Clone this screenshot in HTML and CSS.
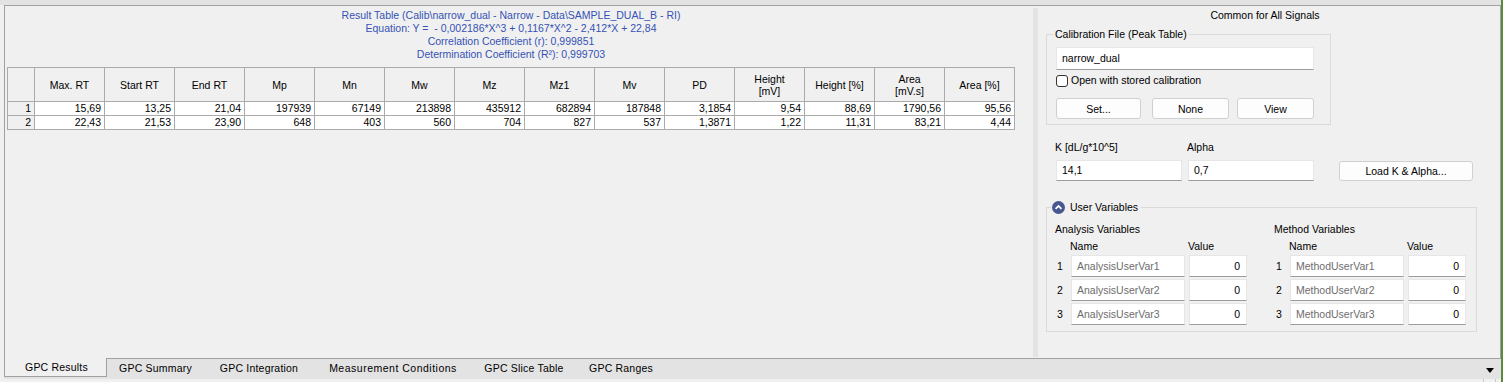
FILE: index.html
```html
<!DOCTYPE html>
<html lang="en">
<head>
    <meta charset="UTF-8">
    <meta name="viewport" content="width=device-width, initial-scale=1.0">
    <title>GPC Results</title>
    <link rel="stylesheet" href="styles.css">
</head>
<body>

    <div class="window">
        <div class="topstrip"></div>

        <div class="workspace">
            <!-- result table -->
            <div class="results">
                <div class="results-inner">
                    <div class="table-title">
                        <div>Result Table (Calib\narrow_dual - Narrow - Data\SAMPLE_DUAL_B - RI)</div>
                        <div>Equation: Y = &nbsp;- 0,002186*X^3 + 0,1167*X^2 - 2,412*X + 22,84</div>
                        <div>Correlation Coefficient (r): 0,999851</div>
                        <div>Determination Coefficient (R²): 0,999703</div>
                    </div>
                    <table class="grid">
                        <colgroup>
                            <col class="c-row">
                            <col><col><col><col><col><col><col><col><col><col><col><col><col><col>
                        </colgroup>
                        <tr class="head">
                            <th></th>
                            <th>Max. RT</th>
                            <th>Start RT</th>
                            <th>End RT</th>
                            <th>Mp</th>
                            <th>Mn</th>
                            <th>Mw</th>
                            <th>Mz</th>
                            <th>Mz1</th>
                            <th>Mv</th>
                            <th>PD</th>
                            <th>Height<br>[mV]</th>
                            <th>Height [%]</th>
                            <th>Area<br>[mV.s]</th>
                            <th>Area [%]</th>
                        </tr>
                        <tr>
                            <th class="rownum">1</th>
                            <td>15,69</td><td>13,25</td><td>21,04</td><td>197939</td><td>67149</td><td>213898</td><td>435912</td>
                            <td>682894</td><td>187848</td><td>3,1854</td><td>9,54</td><td>88,69</td><td>1790,56</td><td>95,56</td>
                        </tr>
                        <tr>
                            <th class="rownum">2</th>
                            <td>22,43</td><td>21,53</td><td>23,90</td><td>648</td><td>403</td><td>560</td><td>704</td>
                            <td>827</td><td>537</td><td>1,3871</td><td>1,22</td><td>11,31</td><td>83,21</td><td>4,44</td>
                        </tr>
                    </table>
                </div>
            </div>

            <div class="splitter"></div>

            <!-- settings common for all signals -->
            <div class="side">
                <div class="side-title">Common for All Signals</div>

                <fieldset class="group calib">
                    <legend>Calibration File (Peak Table)</legend>
                    <div class="field calib-file">narrow_dual</div>
                    <label class="check"><span class="box"></span>Open with stored calibration</label>
                    <div class="btn-row">
                        <button class="btn btn-set">Set...</button>
                        <button class="btn btn-none">None</button>
                        <button class="btn btn-view">View</button>
                    </div>
                </fieldset>

                <div class="kalpha">
                    <div class="lbl">K [dL/g*10^5]</div>
                    <div class="lbl">Alpha</div>
                    <div></div>
                    <div class="field">14,1</div>
                    <div class="field">0,7</div>
                    <button class="btn btn-load">Load K &amp; Alpha...</button>
                </div>

                <fieldset class="group uservars">
                    <legend>
                        <svg class="collapse" width="13" height="13" viewBox="0 0 13 13">
                            <circle cx="6.5" cy="6.5" r="6.5" fill="#47578f"/>
                            <path d="M3.6 7.8 L6.5 4.9 L9.4 7.8" fill="none" stroke="#fff" stroke-width="1.8"/>
                        </svg>
                        User Variables
                    </legend>
                    <div class="var-cols">
                        <div class="varblock">
                            <div class="vb-title">Analysis Variables</div>
                            <div class="vb-grid">
                                <div></div><div class="vb-head">Name</div><div class="vb-head">Value</div>
                                <div class="num">1</div><div class="field name">AnalysisUserVar1</div><div class="field val">0</div>
                                <div class="num">2</div><div class="field name">AnalysisUserVar2</div><div class="field val">0</div>
                                <div class="num">3</div><div class="field name">AnalysisUserVar3</div><div class="field val">0</div>
                            </div>
                        </div>
                        <div class="varblock method">
                            <div class="vb-title">Method Variables</div>
                            <div class="vb-grid">
                                <div></div><div class="vb-head">Name</div><div class="vb-head">Value</div>
                                <div class="num">1</div><div class="field name">MethodUserVar1</div><div class="field val">0</div>
                                <div class="num">2</div><div class="field name">MethodUserVar2</div><div class="field val">0</div>
                                <div class="num">3</div><div class="field name">MethodUserVar3</div><div class="field val">0</div>
                            </div>
                        </div>
                    </div>
                </fieldset>
            </div>
        </div>

        <div class="tabbar">
            <div class="tab active">GPC Results</div>
            <div class="tab t-summary">GPC Summary</div>
            <div class="tab t-integration">GPC Integration</div>
            <div class="tab t-conditions">Measurement Conditions</div>
            <div class="tab t-slice">GPC Slice Table</div>
            <div class="tab t-ranges">GPC Ranges</div>
            <div class="tab-menu"></div>
        </div>
        <div class="tabfoot"><span></span></div>
    </div>

</body>
</html>
```

FILE: styles.css
```css
body {
    margin: 0;
    padding: 0;
    font-family: "Liberation Sans", Arial, sans-serif;
    font-size: 10.5px;
    color: #000;
    background-color: #f0f0f0;
    overflow: hidden;
}
.window {
    width: 1501px;
    height: 382px;
    border-right: 2px solid #5a8b3c;
    background-color: #f0f0f0;
}
.topstrip {
    height: 5px;
    background-color: #e3e3e3;
}
.workspace {
    margin-left: 4px;
    height: 352px;
    border: 1px solid #a0a0a0;
    display: flex;
}

/* left: result table */
.results {
    width: 1028px;
    padding: 3px 0 0 2px;
    box-sizing: border-box;
}
.results-inner {
    width: 1008px;
}
.table-title {
    text-align: center;
    color: #3552b4;
    line-height: 13px;
    margin-bottom: 6px;
}
.grid {
    border-collapse: collapse;
    table-layout: fixed;
    width: 1008px;
    background-color: #fff;
}
.grid col {
    width: 70px;
}
.grid col.c-row {
    width: 27px;
}
.grid th,
.grid td {
    border: 1px solid #ababab;
    padding: 0 3px 0 0;
    line-height: 13px;
    height: 13px;
    white-space: nowrap;
}
.grid th {
    background-color: #f0f0f0;
    font-weight: normal;
}
.grid td,
.grid th.rownum {
    text-align: right;
}
.grid tr.head th {
    height: 33px;
    text-align: center;
    line-height: 12px;
    padding: 0;
}

.splitter {
    width: 5px;
    margin: 2px 0 1px;
    background-color: #e3e3e3;
}

/* right: common settings */
.side {
    width: 460px;
    padding: 3px 0 0 8px;
    box-sizing: border-box;
}
.side-title {
    line-height: 13px;
    text-align: center;
    padding-right: 14px;
}
.group {
    margin: 0;
    border: 1px solid #dadada;
    min-width: 0;
}
.group legend {
    padding: 0 2px;
    margin-left: -3px;
    line-height: 13px;
}
.calib {
    margin-top: 6px;
    width: 285px;
    box-sizing: border-box;
    padding: 0 16px 5px 9px;
}
.field {
    background-color: #fff;
    border: 1px solid #e6e6e6;
    border-bottom-color: #9c9c9c;
    box-sizing: border-box;
    white-space: nowrap;
    overflow: hidden;
}
.calib-file {
    margin-top: 6px;
    height: 23px;
    line-height: 21px;
    padding-left: 5px;
}
.check {
    margin-top: 4px;
    height: 13px;
    line-height: 13px;
    display: flex;
    align-items: center;
}
.check .box {
    width: 12px;
    height: 12px;
    box-sizing: border-box;
    border: 1px solid #333;
    border-radius: 3px;
    background-color: #fff;
    margin-right: 3px;
}
.btn-row {
    margin-top: 11px;
    display: flex;
}
.btn {
    font-family: inherit;
    font-size: 10.5px;
    color: #000;
    height: 21px;
    padding: 0;
    background-color: #fdfdfd;
    border: 1px solid #d0d0d0;
    border-radius: 3px;
}
.btn-set {
    width: 85px;
}
.btn-none {
    width: 77px;
    margin-left: 11px;
}
.btn-view {
    width: 77px;
    margin-left: 8px;
}

.kalpha {
    margin: 16px 0 0 10px;
    display: grid;
    grid-template-columns: 126px 126px 153px;
    column-gap: 6px;
    row-gap: 6px;
}
.kalpha .lbl {
    line-height: 13px;
    margin-left: -1px;
}
.kalpha .field {
    height: 21px;
    line-height: 19px;
    padding-left: 5px;
}
.btn-load {
    width: 134px;
    margin-left: 19px;
    height: 20px;
    align-self: center;
}

.uservars {
    margin-top: 20px;
    width: 431px;
    box-sizing: border-box;
    padding: 0 8px 6px 8px;
}
.uservars legend {
    display: flex;
    align-items: center;
    margin-left: -4px;
    padding: 0 3px 0 1px;
}
.collapse {
    margin-right: 5px;
}
.var-cols {
    display: flex;
}
.method {
    margin-left: 27px;
}
.vb-title {
    line-height: 13px;
    margin: 9px 0 4px;
}
.vb-grid {
    display: grid;
    grid-template-columns: 16px 118px 58px;
    grid-template-rows: 13px;
    grid-auto-rows: 22px;
    row-gap: 2px;
}
.vb-head {
    line-height: 13px;
    margin-left: -1px;
    margin-bottom: 2px;
}
.vb-grid .num {
    line-height: 22px;
    padding-left: 2px;
}
.vb-grid .name {
    width: 114px;
    line-height: 20px;
    padding-left: 5px;
    color: #6d6d6d;
}
.vb-grid .val {
    line-height: 20px;
    text-align: right;
    padding-right: 6px;
}

/* bottom tabs */
.tabbar {
    margin-left: 4px;
    height: 20px;
    background-color: #e3e3e3;
    display: flex;
}
.tab {
    line-height: 18px;
    text-align: center;
    white-space: nowrap;
    letter-spacing: 0.2px;
}
.tab.active {
    width: 103px;
    margin-top: -1px;
    padding: 1px 0 0 2px;
    background-color: #f0f0f0;
    border: 1px solid #a0a0a0;
    border-top: none;
    height: 19px;
    box-sizing: border-box;
    line-height: 17px;
}
.t-summary {
    width: 97px;
}
.t-integration {
    width: 110px;
}
.t-conditions {
    width: 158px;
    letter-spacing: 0.5px;
}
.t-slice {
    width: 104px;
}
.t-ranges {
    width: 90px;
}
.tab-menu {
    margin: 9px 7px 0 auto;
    width: 0;
    height: 0;
    border-left: 4px solid transparent;
    border-right: 4px solid transparent;
    border-top: 5px solid #000;
}
.tabfoot {
    height: 4px;
    display: flex;
    justify-content: flex-end;
}
.tabfoot span {
    width: 11px;
    border-left: 1px solid #c8c8c8;
    border-right: 1px solid #c8c8c8;
    margin-right: 5px;
}
```
